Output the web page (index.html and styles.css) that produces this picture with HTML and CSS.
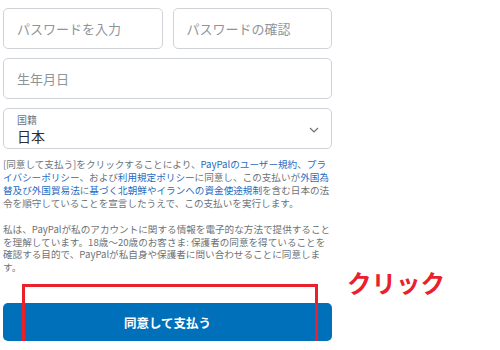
FILE: index.html
```html
<!DOCTYPE html>
<html lang="ja">

<head>
    <meta charset="UTF-8">
    <meta name="viewport" content="width=device-width, initial-scale=1.0">
    <title>同意して支払う</title>
    <link rel="stylesheet" href="styles.css">
</head>

<body>
    <div class="form">
        <div class="row">
            <div class="field"><span class="placeholder">パスワードを入力</span></div>
            <div class="field"><span class="placeholder">パスワードの確認</span></div>
        </div>

        <div class="field"><span class="placeholder">生年月日</span></div>

        <div class="field select">
            <div class="select-value">
                <span class="select-label">国籍</span>
                <span class="select-text">日本</span>
            </div>
            <svg class="chevron" width="10" height="6" viewBox="0 0 10 6">
                <path d="M1 1 L5 5 L9 1" fill="none" stroke="#6c7378" stroke-width="1.2" />
            </svg>
        </div>

        <p class="legal">
            [同意して支払う]をクリックすることにより、<a href="#">PayPalのユーザー規約</a>、<a href="#">プラ<br>イバシーポリシー</a>、および<a href="#">利用規定ポリシー</a>に同意し、この支払いが<a href="#">外国為<br>替及び外国貿易法</a>に<a href="#">基づく北朝鮮やイランへの資金使途規制</a>を含む日本の法<br>令を順守していることを宣言したうえで、この支払いを実行します。
        </p>

        <p class="legal">
            私は、PayPalが私のアカウントに関する情報を電子的な方法で提供すること<br>を理解しています。18歳～20歳のお客さま: 保護者の同意を得ていることを<br>確認する目的で、PayPalが私自身や保護者に問い合わせることに同意しま<br>す。
        </p>

        <div class="submit-wrap">
            <button class="submit">同意して支払う</button>
            <div class="highlight"></div>
            <span class="note">クリック</span>
        </div>
    </div>
</body>

</html>
```

FILE: styles.css
```css
body {
    margin: 0;
    background: #fff;
    font-family: "Noto Sans CJK JP", "Noto Sans", sans-serif;
    color: #6c7378;
}

.form {
    width: 329px;
    padding: 8px 0 0 3px;
    display: flex;
    flex-direction: column;
    gap: 9px;
}

.row {
    display: flex;
    gap: 10px;
}

.row .field {
    flex: 1;
}

/* Inputs */
.field {
    height: 41px;
    box-sizing: border-box;
    border: 1px solid #cfd3d7;
    border-radius: 5px;
    padding: 0 13px;
    display: flex;
    align-items: center;
}

.placeholder {
    font-size: 13px;
    color: #8f9499;
}

.select {
    justify-content: space-between;
    padding-right: 12px;
}

.select-value {
    display: flex;
    flex-direction: column;
    gap: 2px;
}

.select-label {
    font-size: 10px;
    line-height: 12px;
    color: #6c7378;
}

.select-text {
    font-size: 14px;
    line-height: 16px;
    color: #2c2e2f;
}

.chevron {
    margin-top: 2px;
}

/* Legal text */
.legal {
    margin: 0;
    font-size: 9.6px;
    line-height: 12.9px;
    color: #6c7378;
    white-space: nowrap;
}

.legal:first-of-type {
    margin-top: 0;
}

.legal + .legal {
    margin-top: 4px;
}

.legal a {
    color: #1f6cbf;
    text-decoration: none;
}

/* Submit */
.submit-wrap {
    position: relative;
    margin-top: 20px;
}

.submit {
    width: 100%;
    height: 38px;
    border: none;
    border-radius: 5px;
    background: #0070ba;
    color: #fff;
    font-family: inherit;
    font-size: 12.5px;
    font-weight: bold;
}

.highlight {
    position: absolute;
    left: 19px;
    top: -19px;
    width: 296px;
    height: 60px;
    box-sizing: border-box;
    border: 3px solid #e8212b;
}

.note {
    position: absolute;
    left: 344px;
    top: -38px;
    font-size: 24.5px;
    font-weight: bold;
    color: #e8212b;
    white-space: nowrap;
}
```
